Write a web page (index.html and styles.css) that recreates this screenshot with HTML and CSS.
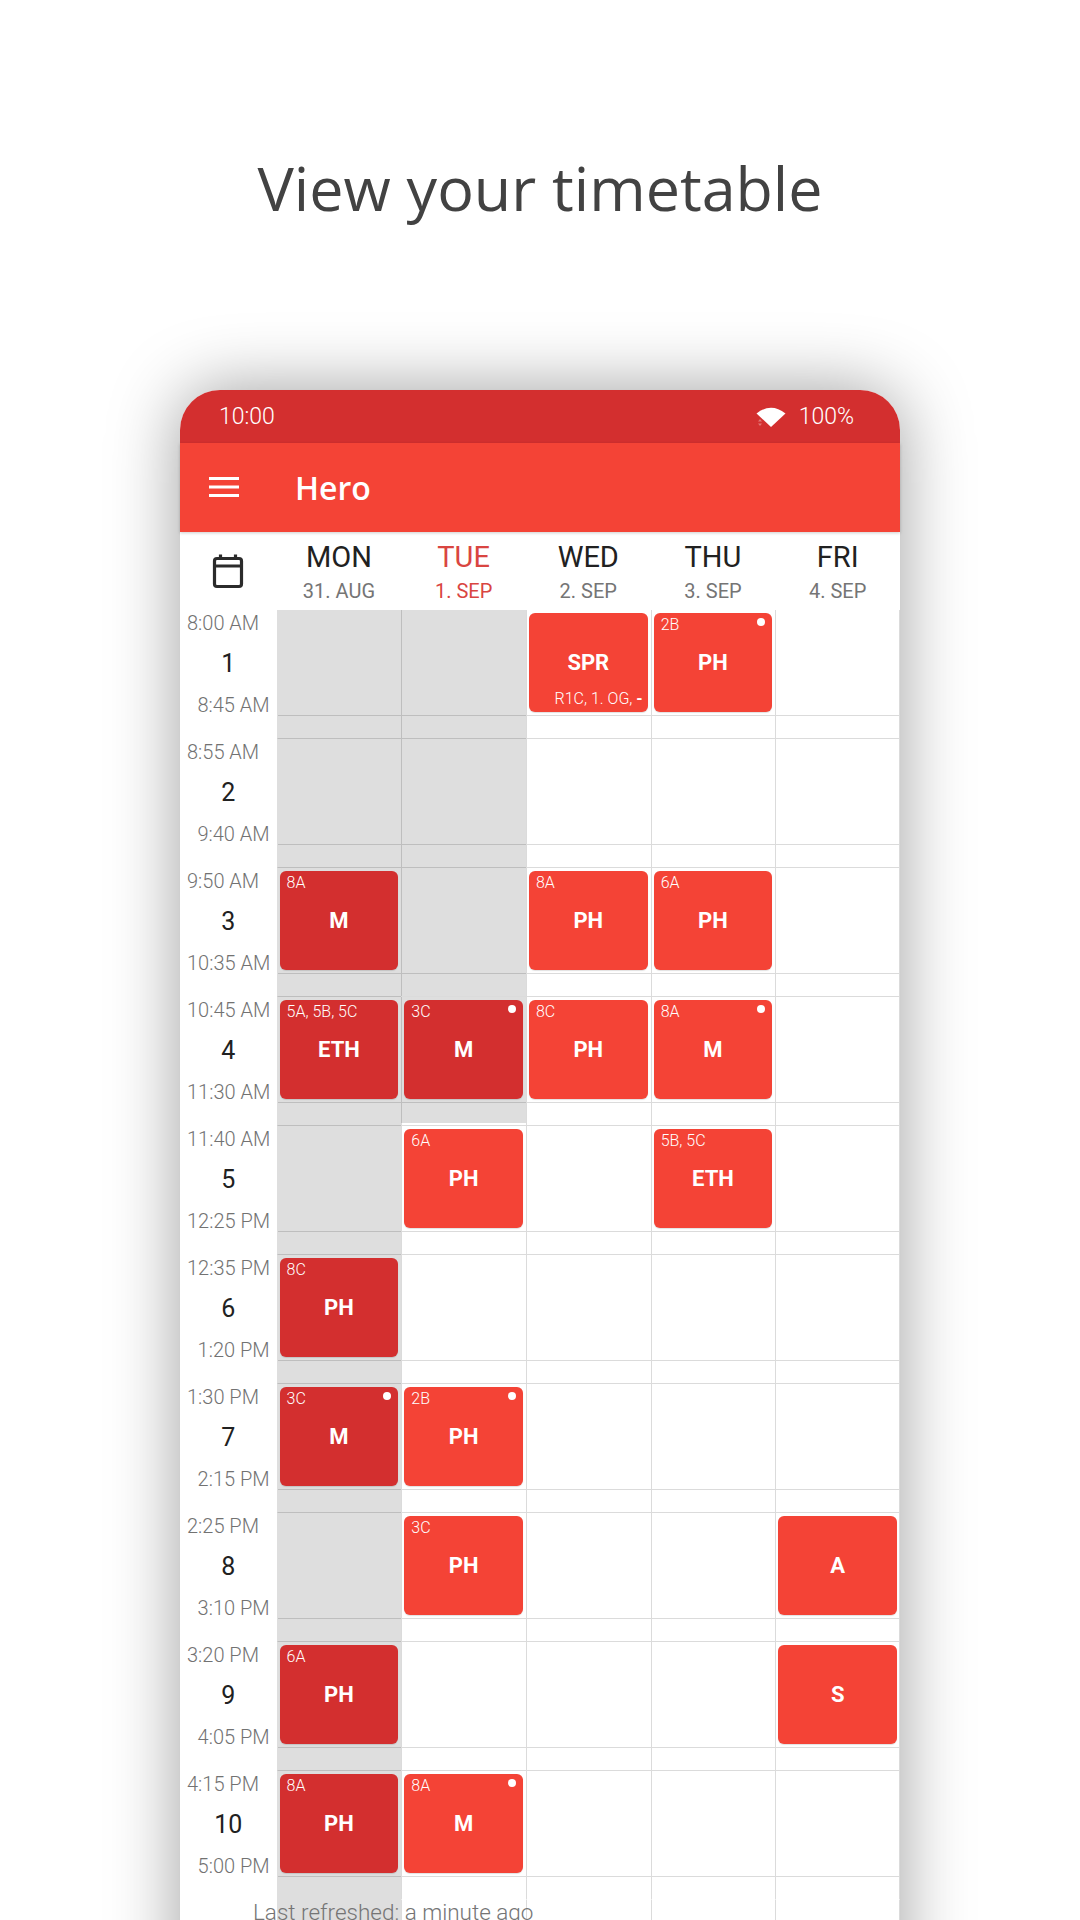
FILE: index.html
```html
<!DOCTYPE html>
<html>
  <head>
    <meta charset="UTF-8">
    <title>View your timetable</title>
    <link rel="stylesheet" href="styles.css">
  </head>
  <body>
    <h1 class="title">View your timetable</h1>

    <div class="phone">
      <div class="statusbar">
        <span>10:00</span>
        <span class="status-right">
          <svg class="wifi" width="32" height="24" viewBox="0 0 32 24">
            <path d="M16 22 L1.5 8.5 Q16 -3 30.5 8.5 Z" fill="#fff"/>
            <path d="M3 16.5 L5 14 L7 16.5 Z M3 18.5 L5 21 L7 18.5 Z" fill="#fff" opacity=".35"/>
          </svg>
          <span>100%</span>
        </span>
      </div>

      <div class="toolbar">
        <svg class="menu" width="30" height="22" viewBox="0 0 30 22">
          <path d="M0 2.5 H30 M0 11 H30 M0 19.5 H30" stroke="#fff" stroke-width="3"/>
        </svg>
        <span class="app-name">Hero</span>
      </div>

      <div class="days">
        <div class="day-icon">
          <svg width="34" height="36" viewBox="0 0 34 36">
            <path d="M3.5 8 Q3.5 5.500 6 5.500 H28 Q30.500 5.500 30.500 8 V31 Q30.500 33.500 28 33.500 H6 Q3.500 33.500 3.500 31 Z M3.500 13 H30.500" fill="none" stroke="#2b2b2b" stroke-width="3.200"/>
            <path d="M9.500 1.500 V6 M24.500 1.500 V6" fill="none" stroke="#2b2b2b" stroke-width="3.200"/>
          </svg>
        </div>
        <div class="day"><b>MON</b><span>31. AUG</span></div>
        <div class="day today"><b>TUE</b><span>1. SEP</span></div>
        <div class="day"><b>WED</b><span>2. SEP</span></div>
        <div class="day"><b>THU</b><span>3. SEP</span></div>
        <div class="day"><b>FRI</b><span>4. SEP</span></div>
      </div>

      <div class="timetable">
        <div class="row first">
          <div class="time"><span class="start">8:00 AM</span><span class="num">1</span><span class="end">8:45 AM</span></div>
          <div class="cell gray"><div class="slot"></div></div>
          <div class="cell gray"><div class="slot"></div></div>
          <div class="cell"><div class="slot"><div class="lesson"><b>SPR</b><span class="room">R1C, 1. OG, <em>-</em></span></div></div></div>
          <div class="cell"><div class="slot"><div class="lesson"><span class="cls">2B</span><i class="dot"></i><b>PH</b></div></div></div>
          <div class="cell"><div class="slot"></div></div>
        </div>

        <div class="row">
          <div class="time"><span class="start">8:55 AM</span><span class="num">2</span><span class="end">9:40 AM</span></div>
          <div class="cell gray"><div class="slot"></div></div>
          <div class="cell gray"><div class="slot"></div></div>
          <div class="cell"><div class="slot"></div></div>
          <div class="cell"><div class="slot"></div></div>
          <div class="cell"><div class="slot"></div></div>
        </div>

        <div class="row">
          <div class="time"><span class="start">9:50 AM</span><span class="num">3</span><span class="end">10:35 AM</span></div>
          <div class="cell gray"><div class="slot"><div class="lesson dark"><span class="cls">8A</span><b>M</b></div></div></div>
          <div class="cell gray"><div class="slot"></div></div>
          <div class="cell"><div class="slot"><div class="lesson"><span class="cls">8A</span><b>PH</b></div></div></div>
          <div class="cell"><div class="slot"><div class="lesson"><span class="cls">6A</span><b>PH</b></div></div></div>
          <div class="cell"><div class="slot"></div></div>
        </div>

        <div class="row">
          <div class="time"><span class="start">10:45 AM</span><span class="num">4</span><span class="end">11:30 AM</span></div>
          <div class="cell gray"><div class="slot"><div class="lesson dark"><span class="cls">5A, 5B, 5C</span><b>ETH</b></div></div></div>
          <div class="cell gray cut"><div class="slot"><div class="lesson dark"><span class="cls">3C</span><i class="dot"></i><b>M</b></div></div></div>
          <div class="cell"><div class="slot"><div class="lesson"><span class="cls">8C</span><b>PH</b></div></div></div>
          <div class="cell"><div class="slot"><div class="lesson"><span class="cls">8A</span><i class="dot"></i><b>M</b></div></div></div>
          <div class="cell"><div class="slot"></div></div>
        </div>

        <div class="row">
          <div class="time"><span class="start">11:40 AM</span><span class="num">5</span><span class="end">12:25 PM</span></div>
          <div class="cell gray"><div class="slot"></div></div>
          <div class="cell"><div class="slot"><div class="lesson"><span class="cls">6A</span><b>PH</b></div></div></div>
          <div class="cell"><div class="slot"></div></div>
          <div class="cell"><div class="slot"><div class="lesson"><span class="cls">5B, 5C</span><b>ETH</b></div></div></div>
          <div class="cell"><div class="slot"></div></div>
        </div>

        <div class="row">
          <div class="time"><span class="start">12:35 PM</span><span class="num">6</span><span class="end">1:20 PM</span></div>
          <div class="cell gray"><div class="slot"><div class="lesson dark"><span class="cls">8C</span><b>PH</b></div></div></div>
          <div class="cell"><div class="slot"></div></div>
          <div class="cell"><div class="slot"></div></div>
          <div class="cell"><div class="slot"></div></div>
          <div class="cell"><div class="slot"></div></div>
        </div>

        <div class="row">
          <div class="time"><span class="start">1:30 PM</span><span class="num">7</span><span class="end">2:15 PM</span></div>
          <div class="cell gray"><div class="slot"><div class="lesson dark"><span class="cls">3C</span><i class="dot"></i><b>M</b></div></div></div>
          <div class="cell"><div class="slot"><div class="lesson"><span class="cls">2B</span><i class="dot"></i><b>PH</b></div></div></div>
          <div class="cell"><div class="slot"></div></div>
          <div class="cell"><div class="slot"></div></div>
          <div class="cell"><div class="slot"></div></div>
        </div>

        <div class="row">
          <div class="time"><span class="start">2:25 PM</span><span class="num">8</span><span class="end">3:10 PM</span></div>
          <div class="cell gray"><div class="slot"></div></div>
          <div class="cell"><div class="slot"><div class="lesson"><span class="cls">3C</span><b>PH</b></div></div></div>
          <div class="cell"><div class="slot"></div></div>
          <div class="cell"><div class="slot"></div></div>
          <div class="cell"><div class="slot"><div class="lesson"><b>A</b></div></div></div>
        </div>

        <div class="row">
          <div class="time"><span class="start">3:20 PM</span><span class="num">9</span><span class="end">4:05 PM</span></div>
          <div class="cell gray"><div class="slot"><div class="lesson dark"><span class="cls">6A</span><b>PH</b></div></div></div>
          <div class="cell"><div class="slot"></div></div>
          <div class="cell"><div class="slot"></div></div>
          <div class="cell"><div class="slot"></div></div>
          <div class="cell"><div class="slot"><div class="lesson"><b>S</b></div></div></div>
        </div>

        <div class="row">
          <div class="time"><span class="start">4:15 PM</span><span class="num">10</span><span class="end">5:00 PM</span></div>
          <div class="cell gray"><div class="slot"><div class="lesson dark"><span class="cls">8A</span><b>PH</b></div></div></div>
          <div class="cell"><div class="slot"><div class="lesson"><span class="cls">8A</span><i class="dot"></i><b>M</b></div></div></div>
          <div class="cell"><div class="slot"></div></div>
          <div class="cell"><div class="slot"></div></div>
          <div class="cell"><div class="slot"></div></div>
        </div>

        <div class="row tail">
          <div class="time"></div>
          <div class="cell gray"></div>
          <div class="cell"></div>
          <div class="cell"></div>
          <div class="cell"></div>
          <div class="cell"></div>
          <p class="refreshed">Last refreshed: a minute ago</p>
        </div>
      </div>
    </div>
  </body>
</html>
```

FILE: styles.css
```css
html, body {
  margin: 0;
  height: 1920px;
  overflow: hidden;
  background-color: #fff;
}
body {
  font-family: Roboto, sans-serif;
  color: #212121;
}

.title {
  box-sizing: border-box;
  height: 390px;
  margin: 0;
  padding-top: 143px;
  font-family: "Open Sans", sans-serif;
  font-size: 61px;
  line-height: 90px;
  font-weight: 400;
  text-align: center;
  color: #424242;
}

.phone {
  width: 720px;
  margin-left: 180px;
  border-radius: 40px 40px 0 0;
  background-color: #fff;
  box-shadow: 0 0 70px rgba(0, 0, 0, 0.38);
}

.statusbar {
  display: flex;
  justify-content: space-between;
  align-items: center;
  height: 53px;
  padding: 0 46px 0 39px;
  border-radius: 40px 40px 0 0;
  background-color: #d32f2f;
  color: #fff;
  font-size: 23px;
  font-weight: 300;
}
.status-right {
  display: flex;
  align-items: center;
  gap: 12px;
}

.toolbar {
  position: relative;
  z-index: 2;
  display: flex;
  align-items: center;
  height: 89px;
  padding-left: 29px;
  background-color: #f44336;
  box-shadow: 0 1px 3px rgba(0, 0, 0, 0.2);
}
.menu {
  margin-top: -1px;
}
.app-name {
  margin-left: 56px;
  color: #fff;
  font-family: "Open Sans", sans-serif;
  font-size: 32px;
  font-weight: 600;
}

.days {
  position: relative;
  z-index: 1;
  display: grid;
  grid-template-columns: 96.6px repeat(5, 1fr);
  height: 78px;
  margin-bottom: -1px;
  background-color: #fff;
}
.day-icon {
  display: flex;
  justify-content: center;
  align-items: center;
}
.day {
  display: flex;
  flex-direction: column;
  align-items: center;
  padding-top: 8px;
}
.day b {
  font-size: 29px;
  line-height: 34px;
  font-weight: 400;
}
.day span {
  margin-top: 5px;
  color: #757575;
  font-size: 20px;
  line-height: 24px;
}
.today b,
.today span {
  color: #d94541;
}

.row {
  display: grid;
  grid-template-columns: 96.6px repeat(5, 1fr);
  height: 129px;
  position: relative;
}
.time {
  display: flex;
  flex-direction: column;
  justify-content: space-between;
  box-sizing: border-box;
  height: 108px;
  padding: 2px 7px 0;
  background-color: #fff;
  color: #727272;
  font-size: 20px;
  line-height: 24px;
  font-weight: 300;
  white-space: nowrap;
}
.end {
  text-align: right;
}
.num {
  color: #212121;
  font-size: 25px;
  font-weight: 400;
  text-align: center;
}

.cell {
  box-sizing: border-box;
  min-width: 0;
  border-top: 1px solid rgba(0, 0, 0, 0.14);
  border-left: 1px solid rgba(0, 0, 0, 0.14);
}
.time + .cell {
  border-left-color: transparent;
}
.cell:last-of-type {
  border-right: 1px solid rgba(0, 0, 0, 0.14);
}
.first .cell,
.tail .cell {
  border-top-color: transparent;
}
.gray {
  background-color: #dedede;
}
.gray.cut {
  background: linear-gradient(#dedede 126px, #fff 126px);
}
.slot {
  box-sizing: border-box;
  height: 106px;
  padding: 3px 3px 0 2px;
  border-bottom: 1px solid rgba(0, 0, 0, 0.14);
}
.cell:last-of-type .slot {
  padding-right: 2px;
}

.lesson {
  position: relative;
  display: flex;
  justify-content: center;
  align-items: center;
  height: 99px;
  border-radius: 6px;
  background-color: #f44336;
  color: #fff;
  box-shadow: 0 1px 1px rgba(0, 0, 0, 0.12);
}
.lesson.dark {
  background-color: #d32f2f;
}
.lesson b {
  font-size: 22px;
  font-weight: 700;
}
.cls {
  position: absolute;
  top: 2px;
  left: 7px;
  font-size: 16px;
  line-height: 20px;
  font-weight: 300;
}
.room {
  position: absolute;
  right: 5px;
  bottom: 3px;
  font-size: 16px;
  line-height: 20px;
  font-weight: 300;
  white-space: nowrap;
}
.room em {
  font-style: normal;
  font-weight: 700;
}
.dot {
  position: absolute;
  top: 5px;
  right: 7px;
  width: 8px;
  height: 8px;
  border-radius: 50%;
  background-color: #fff;
}

.refreshed {
  position: absolute;
  top: 0;
  left: 73px;
  margin: 0;
  color: #757575;
  font-size: 22.500px;
  line-height: 26px;
  font-weight: 300;
  white-space: nowrap;
}
```
